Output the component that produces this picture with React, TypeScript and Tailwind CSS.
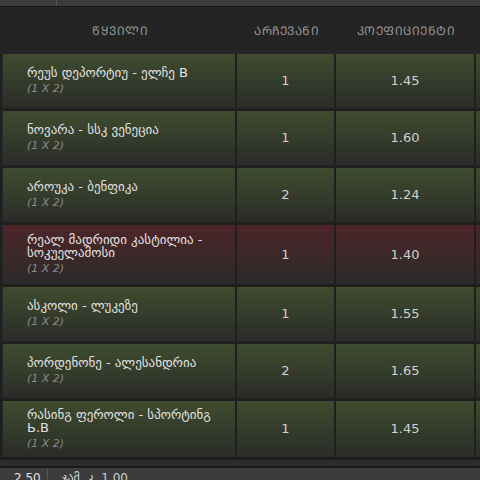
import React from "react";

type Row = { name: string; pick: string; odd: string; lost?: boolean; h: string };

const rows: Row[] = [
  { name: "რეუს დეპორტიუ - ელჩე B", pick: "1", odd: "1.45", h: "h-[54px]" },
  { name: "ნოვარა - სსკ ვენეცია", pick: "1", odd: "1.60", h: "h-[54px]" },
  { name: "აროუკა - ბენფიკა", pick: "2", odd: "1.24", h: "h-[54px]" },
  { name: "რეალ მადრიდი კასტილია - სოკუელამოსი", pick: "1", odd: "1.40", lost: true, h: "h-[59px]" },
  { name: "ასკოლი - ლუკეზე", pick: "1", odd: "1.55", h: "h-[54px]" },
  { name: "პორდენონე - ალესანდრია", pick: "2", odd: "1.65", h: "h-[54px]" },
  { name: "რასინგ ფეროლი - სპორტინგ Ь.B", pick: "1", odd: "1.45", h: "h-[56px]" },
];

export default function App() {
  return (
    <div
      className="w-[480px] h-[480px] overflow-hidden bg-[#1e1e1e] flex flex-col"
      style={{ fontFamily: '"DejaVu Sans", "Noto Sans", sans-serif' }}
    >
      {/* top strip */}
      <div className="h-[6px] bg-[#3a3a3a] flex shrink-0">
        <div className="w-[57px] border-r border-[#555]" />
      </div>
      <div className="h-[1px] bg-[#181818] shrink-0" />
      {/* header */}
      <div className="h-[47px] bg-[#242424] flex items-center shrink-0 text-[#959595] text-[12px] tracking-[0.5px]">
        <div className="ml-[3px] w-[234px] text-center">ᲬᲧᲕᲘᲚᲘ</div>
        <div className="w-[99px] text-center">ᲐᲠᲩᲔᲕᲐᲜᲘ</div>
        <div className="w-[140px] text-center">ᲙᲝᲔᲤᲘᲪᲘᲔᲜᲢᲘ</div>
      </div>
      {/* rows */}
      <div className="flex flex-col gap-[3px] pl-[2px] bg-[#1f1f1f] shrink-0">
        {rows.map((r, i) => (
          <div key={i} className={`${r.h} flex gap-[2px]`}>
            {[0, 1, 2, 3].map((c) => {
              const bg = r.lost
                ? "bg-gradient-to-b from-[#4d2428] to-[#2b2a2a]"
                : "bg-gradient-to-b from-[#3f4c2e] to-[#2a2c28]";
              if (c === 0)
                return (
                  <div key={c} className={`${bg} w-[233px] flex flex-col justify-center pl-[24px] pr-[10px] border-l border-[#2a2a2a]`}>
                    <div className="text-[13px] leading-[13px] text-[#e0e0e0]">{r.name}</div>
                    <div className="text-[11px] leading-[14px] mt-[3px] italic text-[#8a8a8a]">(1 X 2)</div>
                  </div>
                );
              if (c === 1)
                return (
                  <div key={c} className={`${bg} w-[97px] flex items-center justify-center text-[13px] text-[#d0d0d0]`}>
                    {r.pick}
                  </div>
                );
              if (c === 2)
                return (
                  <div key={c} className={`${bg} w-[138px] flex items-center justify-center text-[13px] text-[#d0d0d0]`}>
                    {r.odd}
                  </div>
                );
              return <div key={c} className={`${bg} flex-1`} />;
            })}
          </div>
        ))}
      </div>
      {/* bottom */}
      <div className="h-[3px] bg-[#1c1c1c] shrink-0" />
      <div className="h-[6px] bg-[#2c2c2c] shrink-0" />
      <div className="h-[2px] bg-[#1a1a1a] shrink-0" />
      <div className="flex-1 bg-[#3c3c3c] flex text-[12px] text-[#e0e0e0] leading-[14px]">
        <div className="w-[48px] border-r border-[#555] pl-[14px] pt-[3px]">2.50</div>
        <div className="pl-[14px] pt-[3px] text-[#cfcfcf]">ჯამ. კ. 1.00</div>
      </div>
    </div>
  );
}
